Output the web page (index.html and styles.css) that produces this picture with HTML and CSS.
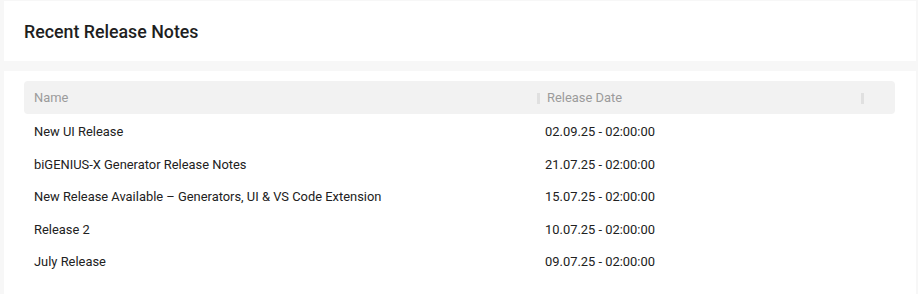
FILE: index.html
```html
<!DOCTYPE html>
<html lang="en">
<head>
    <meta charset="UTF-8">
    <meta name="viewport" content="width=device-width, initial-scale=1.0">
    <title>Recent Release Notes</title>
    <link rel="stylesheet" href="styles.css">
</head>
<body>
    <div class="panel panel-title">
        <h2>Recent Release Notes</h2>
    </div>
    <div class="panel panel-table">
        <div class="grid">
            <div class="grid-head">
                <div class="cell">Name</div>
                <div class="cell sep">Release Date</div>
                <div class="tail sep"></div>
            </div>
            <div class="grid-row">
                <div class="cell">New UI Release</div>
                <div class="cell">02.09.25 - 02:00:00</div>
            </div>
            <div class="grid-row">
                <div class="cell">biGENIUS-X Generator Release Notes</div>
                <div class="cell">21.07.25 - 02:00:00</div>
            </div>
            <div class="grid-row">
                <div class="cell">New Release Available – Generators, UI &amp; VS Code Extension</div>
                <div class="cell">15.07.25 - 02:00:00</div>
            </div>
            <div class="grid-row">
                <div class="cell">Release 2</div>
                <div class="cell">10.07.25 - 02:00:00</div>
            </div>
            <div class="grid-row">
                <div class="cell">July Release</div>
                <div class="cell">09.07.25 - 02:00:00</div>
            </div>
        </div>
    </div>
</body>
</html>
```

FILE: styles.css
```css
body {
    margin: 0;
    padding: 1px 2px 0 4px;
    background: #f7f7f7;
    font-family: Roboto, "Liberation Sans", Arial, sans-serif;
    color: #212121;
    display: flex;
    flex-direction: column;
    gap: 10px;
}
.panel {
    background: #fff;
}
.panel-title {
    height: 60px;
    display: flex;
    align-items: center;
    padding: 0 20px;
}
.panel-title h2 {
    margin: 0;
    font-size: 17.8px;
    font-weight: 500;
    color: #1f1f1f;
}
.panel-table {
    padding: 10px 21px 20px 20px;
}
.grid-head,
.grid-row {
    display: grid;
    grid-template-columns: 513px 1fr;
    align-items: center;
    font-size: 12.9px;
}
.grid-head {
    grid-template-columns: 513px 1fr 34px;
    height: 33px;
    background: #f2f2f2;
    border-radius: 4px;
    color: #9b9b9b;
}
.grid-row {
    box-sizing: border-box;
    height: 32.5px;
    padding-top: 3px;
    color: #212121;
}
.cell {
    padding: 0 10px;
    white-space: nowrap;
}
.grid-row .cell:last-child {
    padding-left: 8px;
}
.sep {
    position: relative;
}
.sep::before {
    content: "";
    position: absolute;
    left: 0;
    top: 50%;
    width: 3px;
    height: 11px;
    margin-top: -5px;
    background: #e0e0e0;
}
.tail {
    height: 100%;
}
```
